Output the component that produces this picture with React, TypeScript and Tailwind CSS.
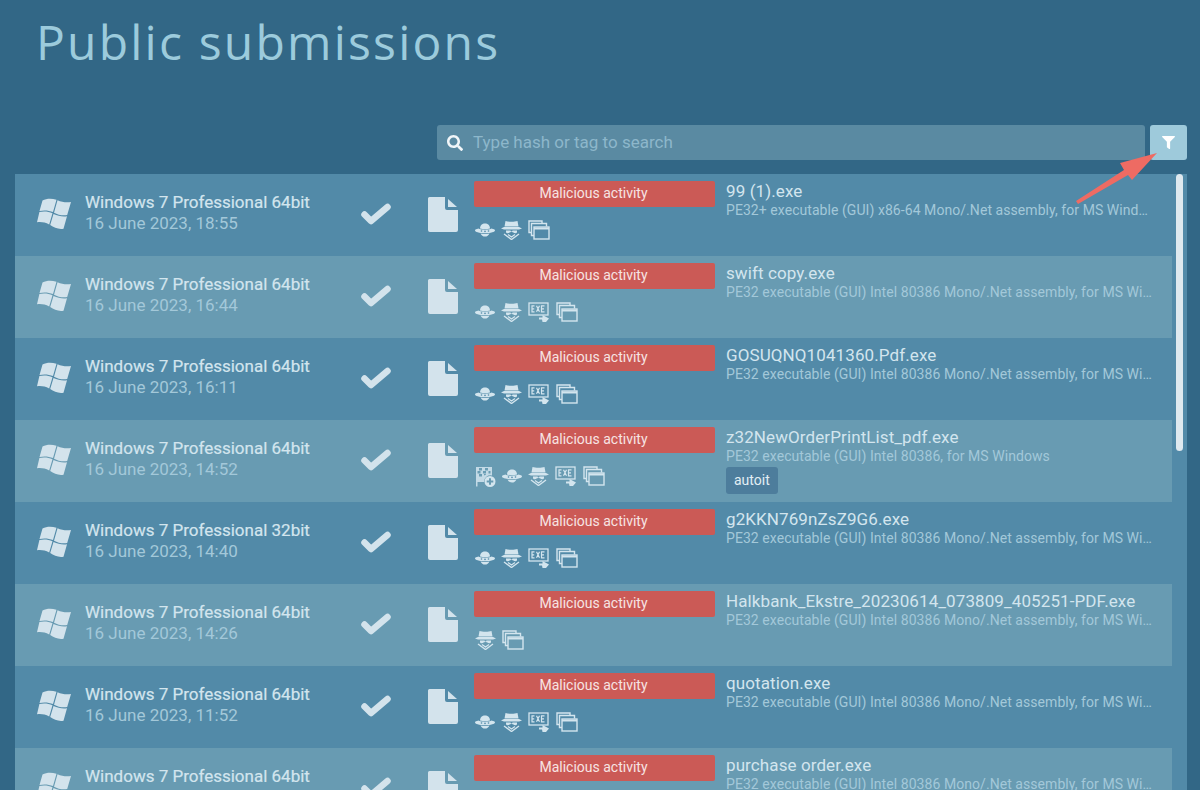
import { FaFilter, FaSearch } from 'react-icons/fa'

type IconName = 'flag' | 'ufo' | 'spy' | 'exe' | 'stack'

type Submission = {
  os: string
  date: string
  name: string
  description: string
  icons: IconName[]
  tag?: string
}

const submissions: Submission[] = [
  {
    os: 'Windows 7 Professional 64bit',
    date: '16 June 2023, 18:55',
    name: '99 (1).exe',
    description: 'PE32+ executable (GUI) x86-64 Mono/.Net assembly, for MS Windows',
    icons: ['ufo', 'spy', 'stack'],
  },
  {
    os: 'Windows 7 Professional 64bit',
    date: '16 June 2023, 16:44',
    name: 'swift copy.exe',
    description: 'PE32 executable (GUI) Intel 80386 Mono/.Net assembly, for MS Windows',
    icons: ['ufo', 'spy', 'exe', 'stack'],
  },
  {
    os: 'Windows 7 Professional 64bit',
    date: '16 June 2023, 16:11',
    name: 'GOSUQNQ1041360.Pdf.exe',
    description: 'PE32 executable (GUI) Intel 80386 Mono/.Net assembly, for MS Windows',
    icons: ['ufo', 'spy', 'exe', 'stack'],
  },
  {
    os: 'Windows 7 Professional 64bit',
    date: '16 June 2023, 14:52',
    name: 'z32NewOrderPrintList_pdf.exe',
    description: 'PE32 executable (GUI) Intel 80386, for MS Windows',
    icons: ['flag', 'ufo', 'spy', 'exe', 'stack'],
    tag: 'autoit',
  },
  {
    os: 'Windows 7 Professional 32bit',
    date: '16 June 2023, 14:40',
    name: 'g2KKN769nZsZ9G6.exe',
    description: 'PE32 executable (GUI) Intel 80386 Mono/.Net assembly, for MS Windows',
    icons: ['ufo', 'spy', 'exe', 'stack'],
  },
  {
    os: 'Windows 7 Professional 64bit',
    date: '16 June 2023, 14:26',
    name: 'Halkbank_Ekstre_20230614_073809_405251-PDF.exe',
    description: 'PE32 executable (GUI) Intel 80386 Mono/.Net assembly, for MS Windows',
    icons: ['spy', 'stack'],
  },
  {
    os: 'Windows 7 Professional 64bit',
    date: '16 June 2023, 11:52',
    name: 'quotation.exe',
    description: 'PE32 executable (GUI) Intel 80386 Mono/.Net assembly, for MS Windows',
    icons: ['ufo', 'spy', 'exe', 'stack'],
  },
  {
    os: 'Windows 7 Professional 64bit',
    date: '16 June 2023, 11:40',
    name: 'purchase order.exe',
    description: 'PE32 executable (GUI) Intel 80386 Mono/.Net assembly, for MS Windows',
    icons: ['ufo', 'spy', 'exe', 'stack'],
  },
]

function WindowsLogo() {
  return (
    <svg viewBox="0 0 34 32" className="h-8 w-[34px] text-[#d3e3ec]" fill="currentColor">
      <path d="M5.500 2.500C9.500.4 14.500.2 19.500 1.800L16 14C12 12.400 7 12 2.500 13Z" />
      <path d="M20.500 2.300C25 4.200 29.500 4.800 34 4L30.200 17C25.500 17.800 21 16.800 17 14.700Z" />
      <path d="M2.400 14C7 13 11.500 13.500 15.500 15.200L12.200 26.500C8 24.500 4.500 23.700 0 24.300Z" />
      <path d="M16.500 16C21 18 25.500 18.800 30 18.200L26.500 30.700C21.500 31.500 17 29.800 13.200 27Z" />
    </svg>
  )
}

function CheckMark() {
  return (
    <svg viewBox="0 0 30 24" className="h-6 w-[30px] text-[#d3e3ec]" fill="none" stroke="currentColor" strokeWidth="6.500" strokeLinecap="round" strokeLinejoin="round">
      <path d="M3.500 12.500 10 19 26.500 5" />
    </svg>
  )
}

function FileIcon() {
  return (
    <svg viewBox="0 0 30 35" className="h-[35px] w-[30px] text-[#d3e3ec]" fill="currentColor">
      <path d="M1.500 0H17V11a2 2 0 0 0 2 2H30V33a2 2 0 0 1-2 2H2a2 2 0 0 1-2-2V1.500A1.500 1.500 0 0 1 1.500 0Z" />
      <path d="M20 2 29 10H20Z" />
    </svg>
  )
}

function BehaviorIcon({ name }: { name: IconName }) {
  if (name === 'spy') {
    return (
      <svg viewBox="0 0 21 20" className="h-5 w-[21px] text-[#d3e5ee]" fill="currentColor">
        <path d="M4.500 1C7.500 2 13.500 2 16.500 1L17.500 6.500H3.500Z" />
        <path d="M0 8.500 3 7h15l3 1.500-3 1h-15Z" />
        <path d="M5 10.500h4.500l.5 1h1l.5-1H16V12c0 1.400-2.500 1.800-3.600.6l-1.400-.6h-1l-1.400.6C7.500 13.800 5 13.400 5 12Z" />
        <path d="M3 14 10.500 19.500 18 14" fill="none" stroke="currentColor" strokeWidth="1.400" />
        <path d="M7 14.500 10.500 17 14 14.500" fill="none" stroke="currentColor" strokeWidth="1.200" />
      </svg>
    )
  }

  if (name === 'ufo') {
    return (
      <svg viewBox="0 0 20 14" className="h-[14px] w-5 text-[#d3e5ee]" fill="currentColor">
        <path d="M5 5.500C5 2.400 7.200.5 10 .5S15 2.400 15 5.500C12 6.500 8 6.500 5 5.500Z" />
        <path d="M3.400 5.600C6 7.200 14 7.200 16.600 5.600 18.600 6.100 20 6.700 20 7.400 20 8.800 16 10 10 10S0 8.800 0 7.400C0 6.700 1.400 6.100 3.400 5.600Z" />
        <path d="M5.500 10.400C8 11 12 11 14.500 10.400 13.600 12.400 12 13.500 10 13.500S6.400 12.400 5.500 10.400Z" />
        <circle cx="6.500" cy="8" r=".8" fill="#528aa8" />
        <circle cx="10" cy="8.400" r=".8" fill="#528aa8" />
        <circle cx="13.500" cy="8" r=".8" fill="#528aa8" />
      </svg>
    )
  }

  if (name === 'exe') {
    return (
      <svg viewBox="0 0 22 20" className="h-5 w-[22px] text-[#d3e5ee]" fill="none" stroke="currentColor">
        <rect x="1" y="1" width="19" height="12" strokeWidth="1.300" />
        <path d="M6.500 3.800H4v6h2.500M4 6.800h2.200M8.500 3.800l3 6M11.500 3.800l-3 6M16.500 3.800H13.500v6h3M13.500 6.800h2.500" strokeWidth="1.200" />
        <path d="M11 15.500h3.500V13l6.500 3.500-3 3.500h-3.500l-.5-2.500H11Z" fill="currentColor" stroke="none" />
      </svg>
    )
  }

  if (name === 'stack') {
    return (
      <svg viewBox="0 0 22 20" className="h-5 w-[22px] text-[#d3e5ee]" fill="none" stroke="currentColor" strokeWidth="1.400">
        <path d="M3.500 12.500H1V1h13v2" />
        <path d="M6 15.500H3.500V3.500h15v3" />
        <rect x="6" y="7" width="15" height="12" />
        <path d="M6 8.500h15" strokeWidth="2" />
      </svg>
    )
  }

  return (
    <svg viewBox="0 0 21 21" className="h-[21px] w-[21px] text-[#d3e5ee]" fill="currentColor">
      <path d="M1 1h16v8.500a6.500 6.500 0 0 0-8 6.500H2.500v4.500H1Z" opacity="0.85" />
      <path d="M4 2v2.500h3V2Zm6 0v2.500h3V2ZM2.500 5v2.500h3V5Zm5.500 0v2.500h3V5Zm5.500 0v2.500h2V5ZM4 8v2.500h3V8Zm5 0v1.500l2-1V8Z" fill="#6a9db4" />
      <path fillRule="evenodd" d="M15 10a5.500 5.500 0 1 1 0 11 5.500 5.500 0 0 1 0-11Zm-1 2.200v2.300h-2.300v2h2.300v2.300h2v-2.300h2.300v-2H16v-2.300Z" />
    </svg>
  )
}

function Row({ item, striped }: { item: Submission; striped: boolean }) {
  return (
    <div className={`flex h-[82px] shrink-0 items-start ${striped ? 'bg-[#689bb2]' : ''}`}>
      <div className="mt-[24px] ml-[22px] w-[48px] shrink-0">
        <WindowsLogo />
      </div>
      <div className="mt-[18px] w-[276px] shrink-0 text-[17px] leading-[21px]">
        <p className="text-[#d3e5ee] [-webkit-text-stroke:0.2px_#d3e5ee]">{item.os}</p>
        <p className="text-[#a3c8d9]">{item.date}</p>
      </div>
      <div className="mt-[28px] w-[67px] shrink-0">
        <CheckMark />
      </div>
      <div className="mt-[23px] w-[46px] shrink-0">
        <FileIcon />
      </div>
      <div className="w-[252px] shrink-0 pt-[7px]">
        <div className="flex h-[26px] w-[241px] items-center justify-center rounded-[2px] bg-[#cb5a56] pr-[2px] pb-[2px] text-[14px] text-[#f7e4e3]">
          Malicious activity
        </div>
        <div className="mt-[12px] ml-px flex h-[22px] items-center gap-[6px]">
          {item.icons.map((icon, index) => (
            <BehaviorIcon key={`${icon}-${index}`} name={icon} />
          ))}
        </div>
      </div>
      <div className="w-[426px] min-w-0 shrink-0 pt-[7px]">
        <p className="truncate text-[17px] leading-[21px] tracking-[0.1px] text-[#d3e5ee]">{item.name}</p>
        <p className="truncate text-[14px] leading-[16px] tracking-[0.06px] text-[#a3c8d9]">{item.description}</p>
        {item.tag && (
          <span className="mt-[3px] inline-flex h-[27px] items-center rounded-[3px] bg-[#4d7d9c] px-2 text-[14px] text-[#e2eef4]">
            {item.tag}
          </span>
        )}
      </div>
    </div>
  )
}

export default function App() {
  return (
    <div className="relative h-[790px] w-[1200px] overflow-hidden bg-[#326786] font-['Roboto',sans-serif]">
      <h1 className="pt-[14px] pl-[36px] font-['Open_Sans',sans-serif] text-[48px] leading-[56px] font-normal tracking-[2.2px] text-[#9ccbdc]">
        Public submissions
      </h1>

      <div className="mt-[55px] flex justify-end gap-[5px] pr-[13px]">
        <div className="flex h-[35px] w-[708px] items-center rounded-[3px] bg-[#5a8aa2] pl-[10px]">
          <FaSearch className="h-4 w-4 text-[#f1f6f9]" />
          <span className="ml-[10px] text-[17px] text-[#8db7cb]">Type hash or tag to search</span>
        </div>
        <button type="button" className="flex h-[35px] w-[37px] items-center justify-center rounded-[3px] bg-[#9ecadb]">
          <FaFilter className="h-[13px] w-[13px] text-white" />
        </button>
      </div>

      <div className="mt-[14px] ml-[15px] flex h-[616px] w-[1172px] items-start bg-[#528aa8]">
        <div className="flex w-[1157px] flex-col">
          {submissions.map((item, index) => (
            <Row key={item.date} item={item} striped={index % 2 === 1} />
          ))}
        </div>
        <div className="ml-[4px] h-[616px] w-[7px]">
          <div className="h-[277px] w-[7px] rounded-full bg-[#dfe9ef]" />
        </div>
      </div>

      <svg viewBox="0 0 90 60" className="absolute top-[150px] left-[1073px] h-[60px] w-[90px]" fill="#ee6b63">
        <path d="M3 51 51 20 47 13 84 3 59 30 55 25 5 54Z" />
      </svg>
    </div>
  )
}
